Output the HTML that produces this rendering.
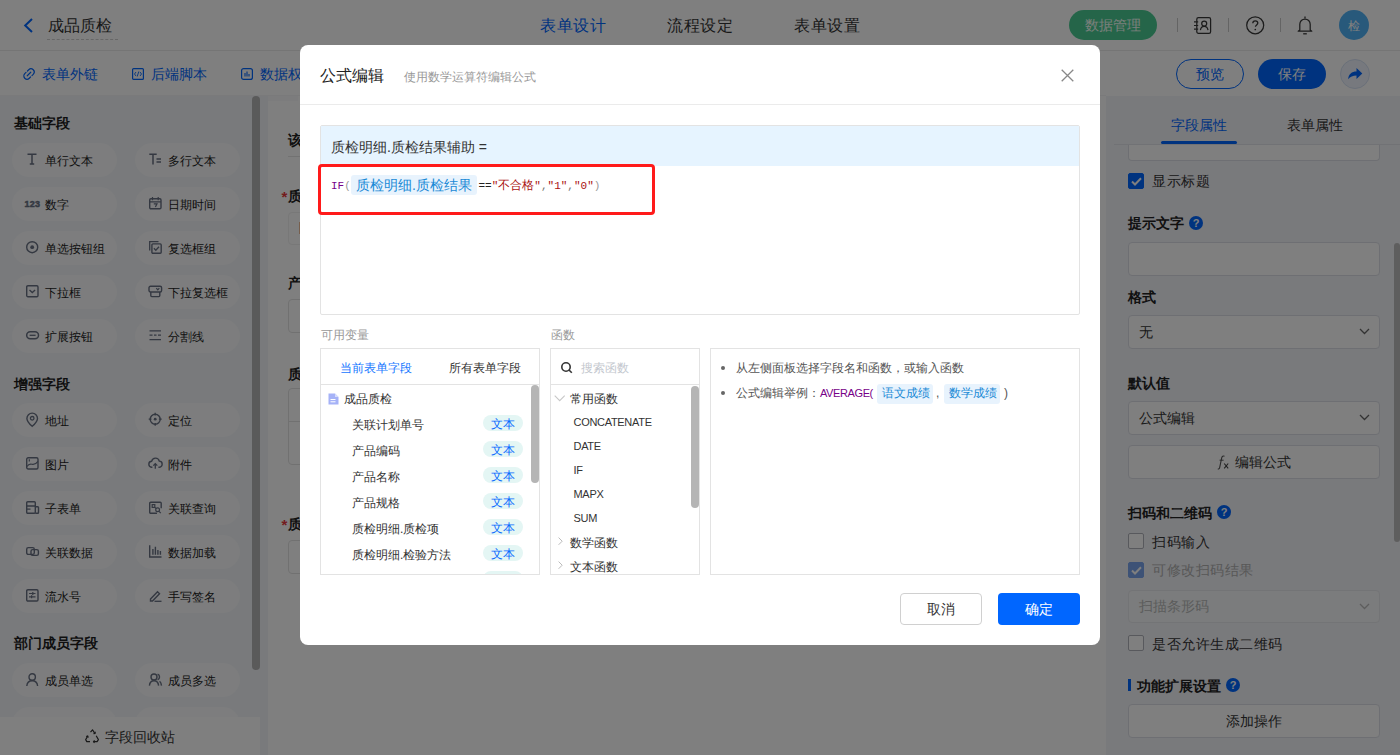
<!DOCTYPE html>
<html><head><meta charset="utf-8">
<style>
*{box-sizing:border-box;margin:0;padding:0}
html,body{width:1400px;height:755px;overflow:hidden;background:#fff;font-family:"Liberation Sans",sans-serif;color:#333}
.a{position:absolute}
.t{position:absolute;white-space:nowrap}
.f12{font-size:12px;line-height:12px}
.f13{font-size:13px;line-height:13px}
.f14{font-size:14px;line-height:14px}
.f16{font-size:16px;line-height:16px}
.b{font-weight:bold}
.blue{color:#0066ff}
svg{position:absolute;overflow:visible}
#mask{position:absolute;left:0;top:0;width:1400px;height:755px;background:rgba(0,0,0,.5)}
#modal{position:absolute;left:300px;top:45px;width:800px;height:600px;background:#fff;border-radius:8px;overflow:hidden}
.chip{position:absolute;width:105px;height:34px;border-radius:17px;background:#fafbfc}
.chip .t{left:33px;top:12px;font-size:12px;line-height:12px;color:#222}
.chip svg{left:14px;top:10px}
.inp{position:absolute;left:1128px;width:252px;border:1px solid #dcdfe6;border-radius:4px;background:#fff}
.cb{position:absolute;left:1128px;width:16px;height:16px;border:1px solid #b0b3bb;border-radius:2px;background:#fff}
.q{position:absolute;width:14px;height:14px;border-radius:7px;background:#0066ff;color:#fff;font-size:11px;line-height:14px;text-align:center;font-weight:bold}
</style></head><body>
<div id="page" class="a" style="left:0;top:0;width:1400px;height:755px;background:#fff">
<div class="a" style="left:0;top:50px;width:1400px;height:1px;background:#ebebeb"></div>
<svg style="left:23px;top:18px" width="11" height="15"><polyline points="9,1 2.2,7.5 9,14" fill="none" stroke="#0066ff" stroke-width="2"/></svg>
<div class="t f16" style="left:48px;top:17.5px;color:#333">成品质检</div>
<div class="a" style="left:47px;top:39px;width:71px;height:0;border-top:1px dashed #cfcfcf"></div>
<div class="t f16" style="left:540px;top:17.5px;letter-spacing:0.6px;color:#0066ff">表单设计</div>
<div class="t f16" style="left:667px;top:17.5px;letter-spacing:0.6px;color:#333">流程设定</div>
<div class="t f16" style="left:794px;top:17.5px;letter-spacing:0.6px;color:#333">表单设置</div>
<div class="a" style="left:1069px;top:10px;width:88px;height:30px;border-radius:15px;background:#4acb93"></div>
<div class="t f14" style="left:1085px;top:18px;color:#f4fff8">数据管理</div>
<div class="a" style="left:1177px;top:18px;width:1px;height:14px;background:#c8c8c8"></div>
<div class="a" style="left:1228px;top:18px;width:1px;height:14px;background:#c8c8c8"></div>
<div class="a" style="left:1280px;top:18px;width:1px;height:14px;background:#c8c8c8"></div>
<svg style="left:1194px;top:17px" width="18" height="17"><rect x="2.8" y="0.6" width="13.8" height="15.8" rx="1.6" fill="none" stroke="#383838" stroke-width="1.25"/><path d="M0 4.8h4.2M0 8.5h4.2M0 12.2h4.2" stroke="#383838" stroke-width="1.2"/><circle cx="10.2" cy="6.6" r="2.5" fill="none" stroke="#383838" stroke-width="1.25"/><path d="M6.4 13.2c0.4-2.6 1.8-3.8 3.8-3.8s3.4 1.2 3.8 3.8" fill="none" stroke="#383838" stroke-width="1.25"/></svg>
<svg style="left:1246px;top:16px" width="19" height="19"><circle cx="9.2" cy="9.3" r="8.5" fill="none" stroke="#383838" stroke-width="1.25"/><path d="M6.8 7.3c0-1.5 1.1-2.5 2.5-2.5s2.5 1 2.5 2.3c0 1.7-2.4 1.9-2.4 3.7" fill="none" stroke="#383838" stroke-width="1.3"/><circle cx="9.3" cy="13.5" r="0.85" fill="#383838"/></svg>
<svg style="left:1297px;top:16px" width="16" height="19"><path d="M2.8 14V8.2a5.2 5.2 0 0 1 10.4 0V14l1.6 1.2H1.2z" fill="none" stroke="#383838" stroke-width="1.25" stroke-linejoin="round"/><path d="M8 0.5v2" stroke="#383838" stroke-width="1.3"/><path d="M6.2 17.8h3.6" stroke="#383838" stroke-width="1.3"/></svg>
<div class="a" style="left:1339px;top:10px;width:30px;height:30px;border-radius:15px;background:#50b2f6"></div>
<div class="t f12" style="left:1348px;top:19.5px;color:#fff">检</div>
<!-- toolbar -->
<svg style="left:23px;top:68px" width="12" height="12"><g transform="rotate(-45 6 6)" fill="none" stroke="#0066ff" stroke-width="1.15" stroke-linecap="round"><path d="M5 2.8H3.2a3.2 3.2 0 0 0 0 6.4H5"/><path d="M7 2.8h1.8a3.2 3.2 0 0 1 0 6.4H7"/><path d="M3.5 6h5"/></g></svg>
<div class="t f14" style="left:42px;top:67px;color:#0066ff">表单外链</div>
<svg style="left:132px;top:68px" width="12" height="12"><rect x="0.6" y="0.6" width="10.8" height="10.8" rx="1" fill="none" stroke="#0066ff" stroke-width="1.2"/><path d="M4 4L2.5 6 4 8M8 4l1.5 2L8 8M6.8 3.5L5.2 8.5" fill="none" stroke="#0066ff" stroke-width="0.9"/></svg>
<div class="t f14" style="left:151px;top:67px;color:#0066ff">后端脚本</div>
<svg style="left:241px;top:68px" width="12" height="12"><rect x="0.6" y="0.6" width="10.8" height="10.8" rx="2" fill="none" stroke="#0066ff" stroke-width="1.2"/><path d="M4 5v3.5M6 3.5v5M8 6v2.5" stroke="#0066ff" stroke-width="1.1"/></svg>
<div class="t f14" style="left:260px;top:67px;color:#0066ff">数据权限</div>
<div class="a" style="left:1176px;top:59px;width:68px;height:30px;border-radius:15px;border:1px solid #0066ff;background:#fff"></div>
<div class="t f14" style="left:1196px;top:67px;color:#0066ff">预览</div>
<div class="a" style="left:1258px;top:59px;width:68px;height:30px;border-radius:15px;background:#0066ff"></div>
<div class="t f14" style="left:1278px;top:67px;color:#fff">保存</div>
<div class="a" style="left:1340px;top:59px;width:30px;height:30px;border-radius:15px;background:#eef3fc;border:1px solid #d5e0f3"></div>
<svg style="left:1347px;top:65px" width="17" height="17"><path d="M1.2 14.2c0.4-5 3.6-7.6 8.3-7.6V3l5.8 5.5-5.8 5.6v-3.6c-3.6 0-6.3 1.3-8.3 3.7z" fill="#0066ff"/></svg>

<div class="a" style="left:0;top:96px;width:268px;height:659px;background:#f2f4f9"></div>
<div class="t f14 b" style="left:14px;top:116.0px;color:#1f1f1f">基础字段</div>
<div class="chip" style="left:12px;top:143px"><svg width="13" height="14"><path d="M1.5 1.2h9M6 1.2v9.8M3.8 11h4.4" stroke="#687083" stroke-width="1.5" fill="none"/></svg><div class="t">单行文本</div></div>
<div class="chip" style="left:135px;top:143px"><svg width="13" height="14"><path d="M0.3 1.2h7.4M4 1.2v10.3M7.5 6h4.5M7.5 9h4.5" stroke="#687083" stroke-width="1.5" fill="none"/></svg><div class="t">多行文本</div></div>
<div class="chip" style="left:12px;top:187px"><svg width="13" height="14"><text x="-1.5" y="9.6" style="font:bold 9px Liberation Sans;letter-spacing:0.2px" fill="#687083" stroke="#687083" stroke-width="0.45">123</text></svg><div class="t">数字</div></div>
<div class="chip" style="left:135px;top:187px"><svg width="13" height="14"><rect x="0.7" y="1.8" width="11.3" height="10" rx="1.2" fill="none" stroke="#687083" stroke-width="1.4"/><path d="M3.5 0v3.2M9.2 0v3.2M0.7 4.8h11.3M4.8 6.8h3.2l-1.6 3.2" stroke="#687083" stroke-width="1.2" fill="none"/></svg><div class="t">日期时间</div></div>
<div class="chip" style="left:12px;top:231px"><svg width="13" height="14"><circle cx="6.2" cy="6.2" r="5.5" fill="none" stroke="#687083" stroke-width="1.4"/><circle cx="6.2" cy="6.2" r="1.9" fill="#687083"/></svg><div class="t">单选按钮组</div></div>
<div class="chip" style="left:135px;top:231px"><svg width="13" height="14"><path d="M0.7 9.5V0.7h8.8" fill="none" stroke="#687083" stroke-width="1.3"/><rect x="2.9" y="2.9" width="9.3" height="9.3" rx="1" fill="none" stroke="#687083" stroke-width="1.4"/><path d="M4.9 7.3l1.9 1.9 3.2-3.5" fill="none" stroke="#687083" stroke-width="1.3"/></svg><div class="t">复选框组</div></div>
<div class="chip" style="left:12px;top:275px"><svg width="13" height="14"><rect x="0.7" y="0.7" width="11.3" height="11" rx="1.2" fill="none" stroke="#687083" stroke-width="1.4"/><path d="M3.5 5l2.8 2.6L9.1 5" fill="none" stroke="#687083" stroke-width="1.3"/></svg><div class="t">下拉框</div></div>
<div class="chip" style="left:135px;top:275px"><svg width="13" height="14"><rect x="0" y="1.2" width="12.6" height="5.8" rx="1.5" fill="none" stroke="#687083" stroke-width="1.4"/><path d="M7.3 3.2l1.5 1.7 1.5-1.7" fill="none" stroke="#687083" stroke-width="1.2"/><path d="M1.8 7v3.6a1 1 0 0 0 1 1h7a1 1 0 0 0 1-1V7" fill="none" stroke="#687083" stroke-width="1.4"/></svg><div class="t">下拉复选框</div></div>
<div class="chip" style="left:12px;top:319px"><svg width="13" height="14"><rect x="0.7" y="2.8" width="11.8" height="7" rx="3.5" fill="none" stroke="#687083" stroke-width="1.5"/><path d="M3.6 6.3h6" stroke="#687083" stroke-width="1.3"/></svg><div class="t">扩展按钮</div></div>
<div class="chip" style="left:135px;top:319px"><svg width="13" height="14"><path d="M0.5 1.8h11.5M0.5 6.2h3M5 6.2h2.5M9 6.2h3M0.5 10.6h11.5" stroke="#687083" stroke-width="1.3" fill="none"/></svg><div class="t">分割线</div></div>
<div class="t f14 b" style="left:14px;top:376.5px;color:#1f1f1f">增强字段</div>
<div class="chip" style="left:12px;top:403px"><svg width="13" height="14"><path d="M6.2 13.3S0.9 8.6 0.9 5.4a5.3 5.3 0 0 1 10.6 0c0 3.2-5.3 7.9-5.3 7.9z" fill="none" stroke="#687083" stroke-width="1.4"/><circle cx="6.2" cy="5.3" r="1.8" fill="none" stroke="#687083" stroke-width="1.3"/></svg><div class="t">地址</div></div>
<div class="chip" style="left:135px;top:403px"><svg width="13" height="14"><circle cx="6.2" cy="6.2" r="5" fill="none" stroke="#687083" stroke-width="1.4"/><circle cx="6.2" cy="6.2" r="1.4" fill="#687083"/><path d="M6.2 -0.3v2.8M6.2 9.9v2.8M-0.3 6.2h2.8M9.9 6.2h2.8" stroke="#687083" stroke-width="1.3"/></svg><div class="t">定位</div></div>
<div class="chip" style="left:12px;top:447px"><svg width="13" height="14"><rect x="0.7" y="0.7" width="11.3" height="11.3" rx="1.5" fill="none" stroke="#687083" stroke-width="1.4"/><path d="M1 9.5c1.5-2.5 3-2.8 5-2.2s3.5 0.2 6-3M3.3 2.3v2.2" stroke="#687083" stroke-width="1.2" fill="none"/></svg><div class="t">图片</div></div>
<div class="chip" style="left:135px;top:447px"><svg width="13" height="14"><path d="M3.4 10.2H3a3 3 0 0 1-0.3-6 3.9 3.9 0 0 1 7.6-.1 3 3 0 0 1-0.4 6.1h-.5" fill="none" stroke="#687083" stroke-width="1.4"/><path d="M6.3 11.8V6.8M4.3 8.6l2-2 2 2" fill="none" stroke="#687083" stroke-width="1.3"/></svg><div class="t">附件</div></div>
<div class="chip" style="left:12px;top:491px"><svg width="13" height="14"><rect x="0.7" y="0.7" width="8.6" height="11.6" rx="1" fill="none" stroke="#687083" stroke-width="1.4"/><path d="M0.7 5h8.6M0.7 8.2h3.8" stroke="#687083" stroke-width="1.3"/><path d="M9.3 5.8h2.4a0.8 0.8 0 0 1 0.8 0.8v4.9a0.8 0.8 0 0 1-0.8 0.8H9.3" fill="none" stroke="#687083" stroke-width="1.4"/></svg><div class="t">子表单</div></div>
<div class="chip" style="left:135px;top:491px"><svg width="13" height="14"><path d="M8 12.3H1.7a1 1 0 0 1-1-1V2.2a1 1 0 0 1 1-1h9.5a1 1 0 0 1 1 1v5" fill="none" stroke="#687083" stroke-width="1.4"/><rect x="3.2" y="3.6" width="2.6" height="2.8" fill="none" stroke="#687083" stroke-width="1.2"/><circle cx="8.6" cy="8.8" r="1.9" fill="none" stroke="#687083" stroke-width="1.2"/><path d="M5.8 6.4l1.5 1.2M10 10.3l1.8 1.9" stroke="#687083" stroke-width="1.2"/></svg><div class="t">关联查询</div></div>
<div class="chip" style="left:12px;top:535px"><svg width="13" height="14"><rect x="0.7" y="2.6" width="7.6" height="6.8" rx="1.6" fill="none" stroke="#687083" stroke-width="1.4"/><rect x="5" y="4.6" width="7.4" height="5.8" rx="1.6" fill="none" stroke="#687083" stroke-width="1.4"/></svg><div class="t">关联数据</div></div>
<div class="chip" style="left:135px;top:535px"><svg width="13" height="14"><path d="M0.7 0.3v11.7h11.8M3.9 4v5.8M6.4 1.8v8M8.9 5v4.8M11.4 6v3.8" stroke="#687083" stroke-width="1.4" fill="none"/></svg><div class="t">数据加载</div></div>
<div class="chip" style="left:12px;top:579px"><svg width="13" height="14"><rect x="0.7" y="0.7" width="11.3" height="11.3" rx="1.2" fill="none" stroke="#687083" stroke-width="1.4"/><path d="M3 4.5h6.5M3 7.8h6.5M6.8 3v3M5.6 6.3v3" stroke="#687083" stroke-width="1.2" fill="none"/></svg><div class="t">流水号</div></div>
<div class="chip" style="left:135px;top:579px"><svg width="13" height="14"><path d="M1.5 10l7-7.3 2 2-7 7.3H1.5z" fill="none" stroke="#687083" stroke-width="1.4"/><path d="M5.5 12.3h7" stroke="#687083" stroke-width="1.3"/></svg><div class="t">手写签名</div></div>
<div class="t f14 b" style="left:14px;top:636.0px;color:#1f1f1f">部门成员字段</div>
<div class="chip" style="left:12px;top:663px"><svg width="13" height="14"><circle cx="6.2" cy="4" r="3.2" fill="none" stroke="#687083" stroke-width="1.4"/><path d="M0.8 13c0.3-3.5 2.4-5.3 5.4-5.3s5.1 1.8 5.4 5.3" fill="none" stroke="#687083" stroke-width="1.4"/></svg><div class="t">成员单选</div></div>
<div class="chip" style="left:135px;top:663px"><svg width="13" height="14"><circle cx="5" cy="4" r="3" fill="none" stroke="#687083" stroke-width="1.4"/><path d="M0.4 12.6c0.3-3.2 2-4.9 4.6-4.9s4.3 1.7 4.6 4.9M8.6 1.2a3 3 0 0 1 0 5.6M10.6 8.2c1.1.9 1.7 2.4 1.9 4.4" fill="none" stroke="#687083" stroke-width="1.4"/></svg><div class="t">成员多选</div></div>
<div class="chip" style="left:12px;top:707px"></div>
<div class="chip" style="left:135px;top:707px"></div>
<div class="a" style="left:252px;top:96px;width:8px;height:574px;border-radius:4px;background:#b4b4b4"></div>
<div class="a" style="left:0;top:717px;width:260px;height:38px;background:#fff"></div>
<svg style="left:85px;top:729px" width="15" height="14"><path d="M5.5 3.2L7.5 0.8l2.3 3.6M11.2 6.8l2.2 3.8-1.3 2h-3.5M5 12.6H1.8L0.7 10.6 2.8 7" fill="none" stroke="#333" stroke-width="1.2" stroke-linejoin="round"/><path d="M8.5 4.6l1.6-.2.2-1.6M3.3 8.6l-.6-1.6-1.6.5M9.5 11.2l-1 1.4 1 1.2" fill="none" stroke="#333" stroke-width="1.1"/></svg>
<div class="t f14" style="left:105px;top:729.5px;color:#333">字段回收站</div>
<div class="t f14 b" style="left:288px;top:133px;color:#222">该表单</div>
<div class="a" style="left:288px;top:156px;width:800px;height:1px;background:#e5e5e5"></div>
<div class="t" style="left:281.5px;top:189px;font-size:15px;line-height:15px;font-weight:bold;color:#e8383d">*</div>
<div class="t f14 b" style="left:288px;top:188.5px;color:#222">质检明细</div>
<div class="a" style="left:288px;top:212px;width:800px;height:33px;border:1px solid #f0f0f0;border-radius:4px"></div>
<div class="a" style="left:298.5px;top:222px;width:1.5px;height:12px;background:#efbf9a"></div>
<div class="t f14 b" style="left:288px;top:275.5px;color:#222">产品名称</div>
<div class="a" style="left:288px;top:299px;width:800px;height:34px;border:1px solid #e3e3e3;border-radius:4px"></div>
<div class="t f14 b" style="left:288px;top:367px;color:#222">质检明细</div>
<div class="a" style="left:288px;top:388px;width:800px;height:77px;border:1px solid #e3e3e3;border-radius:4px"></div>
<div class="a" style="left:288px;top:421px;width:800px;height:1px;background:#e3e3e3"></div>
<div class="t" style="left:281.5px;top:517px;font-size:15px;line-height:15px;font-weight:bold;color:#e8383d">*</div>
<div class="t f14 b" style="left:288px;top:517px;color:#222">质检结果</div>
<div class="a" style="left:288px;top:540px;width:800px;height:34px;border:1px solid #e3e3e3;border-radius:4px"></div>
<div class="a" style="left:0;top:95px;width:1106px;height:1px;background:#f5f5f7"></div>
<div class="a" style="left:268px;top:96px;width:30px;height:5px;background:#f9f9fa"></div>

<div class="a" style="left:1106px;top:96px;width:294px;height:659px;background:#f2f4f9"></div>
<div class="t f14" style="left:1171px;top:117.5px;color:#0066ff">字段属性</div>
<div class="t f14" style="left:1287px;top:117.5px;color:#333">表单属性</div>
<div class="a" style="left:1114px;top:144px;width:286px;height:1px;background:#e2e4ea"></div>
<div class="a" style="left:1161px;top:141px;width:76px;height:3px;border-radius:1.5px;background:#0066ff"></div>
<div class="inp" style="top:120px;height:40px;border-top:none;border-radius:0 0 4px 4px;top:145px;height:16px"></div>
<div class="cb" style="top:173px;background:#0066ff;border-color:#0066ff"><svg style="left:2px;top:3px" width="11" height="9"><path d="M1 4.5l3 3 6-6.3" fill="none" stroke="#fff" stroke-width="2"/></svg></div>
<div class="t f14" style="left:1152px;top:174px;color:#333;letter-spacing:0.5px">显示标题</div>
<div class="t f14 b" style="left:1128px;top:216px;color:#222">提示文字</div>
<div class="q" style="left:1189px;top:216px">?</div>
<div class="inp" style="top:242px;height:34px"></div>
<div class="t f14 b" style="left:1128px;top:289.5px;color:#222">格式</div>
<div class="inp" style="top:315px;height:34px"></div>
<div class="t f14" style="left:1139px;top:325px;color:#333">无</div>
<svg style="left:1359px;top:328px" width="11" height="7"><path d="M1 1l4.5 4.5L10 1" fill="none" stroke="#666" stroke-width="1.3"/></svg>
<div class="t f14 b" style="left:1128px;top:375.5px;color:#222">默认值</div>
<div class="inp" style="top:401px;height:34px"></div>
<div class="t f14" style="left:1139px;top:411px;color:#333">公式编辑</div>
<svg style="left:1359px;top:414px" width="11" height="7"><path d="M1 1l4.5 4.5L10 1" fill="none" stroke="#666" stroke-width="1.3"/></svg>
<div class="inp" style="top:445px;height:34px"></div>
<svg style="left:1217px;top:455px" width="13" height="14"><path d="M7.5 1.2c-1.5-.6-2.4 0-2.8 1.6L2.6 12.8c-.3 1.1-.9 1.4-1.8 1" fill="none" stroke="#555" stroke-width="1.1"/><path d="M2.6 5.2h4" stroke="#555" stroke-width="1"/><path d="M7.2 8.5l4 4.8M11.2 8.5l-4 4.8" stroke="#444" stroke-width="1.1"/></svg>
<div class="t f14" style="left:1235px;top:455px;color:#333">编辑公式</div>
<div class="t f14 b" style="left:1128px;top:505.5px;color:#222">扫码和二维码</div>
<div class="q" style="left:1217px;top:505px">?</div>
<div class="cb" style="top:533px"></div>
<div class="t f14" style="left:1152px;top:534.5px;color:#333;letter-spacing:0.5px">扫码输入</div>
<div class="cb" style="top:562px;background:#7aa5ec;border-color:#7aa5ec"><svg style="left:2px;top:3px" width="11" height="9"><path d="M1 4.5l3 3 6-6.3" fill="none" stroke="#fff" stroke-width="2"/></svg></div>
<div class="t f14" style="left:1152px;top:563px;color:#b0b0b0;letter-spacing:0.5px">可修改扫码结果</div>
<div class="inp" style="top:590px;height:33px;background:#f7f8fa;border-color:#e6e8ec"></div>
<div class="t f14" style="left:1139px;top:599px;color:#b8b8b8">扫描条形码</div>
<svg style="left:1359px;top:603px" width="11" height="7"><path d="M1 1l4.5 4.5L10 1" fill="none" stroke="#bbb" stroke-width="1.3"/></svg>
<div class="cb" style="top:635px"></div>
<div class="t f14" style="left:1152px;top:636.5px;color:#333;letter-spacing:0.5px">是否允许生成二维码</div>
<div class="a" style="left:1128px;top:679px;width:3px;height:12px;background:#0066ff"></div>
<div class="t f14 b" style="left:1137px;top:678.5px;color:#222">功能扩展设置</div>
<div class="q" style="left:1226px;top:678px">?</div>
<div class="inp" style="top:704px;height:34px"></div>
<div class="t f14" style="left:1226px;top:714px;color:#333">添加操作</div>
<div class="a" style="left:1394px;top:243px;width:6px;height:299px;border-radius:3px;background:#bdbdbd"></div>

</div>
<div id="mask"></div>
<div id="modal">
<div class="t f16" style="left:20px;top:22.5px;color:#222">公式编辑</div>
<div class="t f12" style="left:104px;top:25.5px;color:#999">使用数学运算符编辑公式</div>
<svg style="left:761px;top:24px" width="13" height="13"><path d="M0.7 0.7l11.6 11.6M12.3 0.7L0.7 12.3" stroke="#888" stroke-width="1.3"/></svg>
<div class="a" style="left:0px;top:59px;width:800px;height:1px;background:#ebebeb"></div>
<div class="a" style="left:20px;top:80px;width:760px;height:190px;border:1px solid #e3e3e3;border-radius:2px"></div>
<div class="a" style="left:21px;top:81px;width:758px;height:40px;background:#e6f4ff"></div>
<div class="t f14" style="left:31px;top:94.5px;color:#333">质检明细.质检结果辅助 =</div>
<div class="a" style="left:18px;top:119px;width:337px;height:51px;border:3px solid #ff1a1a;border-radius:4px"></div>
<div class="t " style="left:31px;top:136px;font-family:'Liberation Mono',monospace;font-size:11px;line-height:11px"><span style="color:#708">IF</span><span style="color:#999">(</span></div>
<div class="a" style="left:51px;top:130px;width:126px;height:20px;background:#e8f3fd;border-radius:3px"></div>
<div class="t f14" style="left:56px;top:133px;color:#1a8ad6">质检明细.质检结果</div>
<div class="t " style="left:178.5px;top:136px;font-family:'Liberation Mono',monospace;font-size:11px;line-height:11px;color:#222">==<span style="color:#a11">"<span style="font-size:12px">不合格</span>"</span><span style="color:#777">,</span><span style="color:#a11">"1"</span><span style="color:#777">,</span><span style="color:#a11">"0"</span><span style="color:#999">)</span></div>
<div class="t f12" style="left:20.5px;top:283.5px;color:#999">可用变量</div>
<div class="t f12" style="left:250.5px;top:283.5px;color:#999">函数</div>
<div class="a" style="left:20px;top:303px;width:220px;height:227px;border:1px solid #e3e3e3"></div>
<div class="a" style="left:21px;top:339px;width:218px;height:1px;background:#e3e3e3"></div>
<div class="t f12" style="left:40px;top:316.5px;color:#1677ff">当前表单字段</div>
<div class="t f12" style="left:149px;top:316.5px;color:#333">所有表单字段</div>
<svg style="left:28px;top:348px" width="11" height="12"><path d="M0.5 0.5h6.5l3.5 3.5v7.5H0.5z" fill="#a5b2f7"/><path d="M7 0.5V4h3.5" fill="#d6dcfb"/><path d="M2.5 6.5h5M2.5 8.8h5" stroke="#fff" stroke-width="1"/></svg>
<div class="t f12" style="left:44px;top:347.5px;color:#333">成品质检</div>
<div class="a" style="left:21px;top:340px;width:218px;height:189px;overflow:hidden">
<div class="t f12" style="left:31px;top:33.5px;color:#333">关联计划单号</div>
<div class="a" style="left:162px;top:30px;width:40px;height:16px;border-radius:8px;background:#e4f6f4"></div>
<div class="t f12" style="left:170px;top:33.0px;color:#0a6cff">文本</div>
<div class="t f12" style="left:31px;top:59.5px;color:#333">产品编码</div>
<div class="a" style="left:162px;top:56px;width:40px;height:16px;border-radius:8px;background:#e4f6f4"></div>
<div class="t f12" style="left:170px;top:59.0px;color:#0a6cff">文本</div>
<div class="t f12" style="left:31px;top:85.5px;color:#333">产品名称</div>
<div class="a" style="left:162px;top:82px;width:40px;height:16px;border-radius:8px;background:#e4f6f4"></div>
<div class="t f12" style="left:170px;top:85.0px;color:#0a6cff">文本</div>
<div class="t f12" style="left:31px;top:111.5px;color:#333">产品规格</div>
<div class="a" style="left:162px;top:108px;width:40px;height:16px;border-radius:8px;background:#e4f6f4"></div>
<div class="t f12" style="left:170px;top:111.0px;color:#0a6cff">文本</div>
<div class="t f12" style="left:31px;top:137.5px;color:#333">质检明细.质检项</div>
<div class="a" style="left:162px;top:134px;width:40px;height:16px;border-radius:8px;background:#e4f6f4"></div>
<div class="t f12" style="left:170px;top:137.0px;color:#0a6cff">文本</div>
<div class="t f12" style="left:31px;top:163.5px;color:#333">质检明细.检验方法</div>
<div class="a" style="left:162px;top:160px;width:40px;height:16px;border-radius:8px;background:#e4f6f4"></div>
<div class="t f12" style="left:170px;top:163.0px;color:#0a6cff">文本</div>
<div class="t f12" style="left:31px;top:189.5px;color:#333">质检明细.检验标准</div>
<div class="a" style="left:162px;top:186px;width:40px;height:16px;border-radius:8px;background:#e4f6f4"></div>
<div class="t f12" style="left:170px;top:189.0px;color:#0a6cff">文本</div>
<div class="a" style="left:210px;top:0;width:8px;height:98px;border-radius:4px;background:#b5b5b5"></div>
</div>
<div class="a" style="left:250px;top:303px;width:150px;height:227px;border:1px solid #e3e3e3"></div>
<div class="a" style="left:251px;top:339px;width:148px;height:1px;background:#e3e3e3"></div>
<svg style="left:261px;top:317px" width="12" height="12"><circle cx="5" cy="5" r="4.2" fill="none" stroke="#333" stroke-width="1.6"/><path d="M8 8l2.8 2.8" stroke="#333" stroke-width="1.6"/></svg>
<div class="t f12" style="left:281px;top:316.5px;color:#c3c7ce">搜索函数</div>
<div class="a" style="left:251px;top:340px;width:148px;height:189px;overflow:hidden">
<svg style="left:3px;top:10px" width="12" height="7"><path d="M0.7 0.7l5 5 5-5" fill="none" stroke="#c8c8c8" stroke-width="1.1"/></svg>
<div class="t" style="left:18.5px;top:7.5px;font-size:12px;line-height:12px;color:#333">常用函数</div>
<div class="t" style="left:22.5px;top:30.5px;font-size:11px;line-height:12px;letter-spacing:-0.3px;color:#333">CONCATENATE</div>
<div class="t" style="left:22.5px;top:54.5px;font-size:11px;line-height:12px;letter-spacing:-0.3px;color:#333">DATE</div>
<div class="t" style="left:22.5px;top:78.5px;font-size:11px;line-height:12px;letter-spacing:-0.3px;color:#333">IF</div>
<div class="t" style="left:22.5px;top:102.5px;font-size:11px;line-height:12px;letter-spacing:-0.3px;color:#333">MAPX</div>
<div class="t" style="left:22.5px;top:126.5px;font-size:11px;line-height:12px;letter-spacing:-0.3px;color:#333">SUM</div>
<svg style="left:7px;top:152px" width="5" height="9"><path d="M0.6 0.6l3.6 3.6-3.6 3.6" fill="none" stroke="#bbb" stroke-width="1"/></svg>
<div class="t" style="left:18.5px;top:152px;font-size:12px;line-height:12px;color:#333">数学函数</div>
<svg style="left:7px;top:176px" width="5" height="9"><path d="M0.6 0.6l3.6 3.6-3.6 3.6" fill="none" stroke="#bbb" stroke-width="1"/></svg>
<div class="t" style="left:18.5px;top:176px;font-size:12px;line-height:12px;color:#333">文本函数</div>
<div class="a" style="left:140px;top:1px;width:8px;height:122px;border-radius:4px;background:#b5b5b5"></div>
</div>
<div class="a" style="left:410px;top:303px;width:370px;height:227px;border:1px solid #e3e3e3"></div>
<div class="a" style="left:421px;top:321px;width:4px;height:4px;border-radius:2px;background:#666"></div>
<div class="t f12" style="left:436px;top:316.5px;color:#555">从左侧面板选择字段名和函数，或输入函数</div>
<div class="a" style="left:421px;top:346px;width:4px;height:4px;border-radius:2px;background:#666"></div>
<div class="t f12" style="left:436px;top:342px;color:#555">公式编辑举例：</div>
<div class="t f12" style="left:520px;top:342px;color:#708;font-size:11px;letter-spacing:-0.4px">AVERAGE(</div>
<div class="a" style="left:577px;top:338.5px;width:56px;height:20px;background:#e8f3fd;border-radius:3px"></div>
<div class="t f12" style="left:582px;top:342px;color:#1a8ad6">语文成绩</div>
<div class="t f12" style="left:636px;top:342px;color:#555">,</div>
<div class="a" style="left:644px;top:338.5px;width:56px;height:20px;background:#e8f3fd;border-radius:3px"></div>
<div class="t f12" style="left:649px;top:342px;color:#1a8ad6">数学成绩</div>
<div class="t f12" style="left:704px;top:342px;color:#555">)</div>
<div class="a" style="left:600px;top:548px;width:82px;height:32px;border:1px solid #d0d0d0;border-radius:4px;background:#fff"></div>
<div class="t f14" style="left:627px;top:557px;color:#333">取消</div>
<div class="a" style="left:698px;top:548px;width:82px;height:32px;border-radius:4px;background:#0066ff"></div>
<div class="t f14" style="left:725px;top:557px;color:#fff">确定</div>
</div>
</body></html>
